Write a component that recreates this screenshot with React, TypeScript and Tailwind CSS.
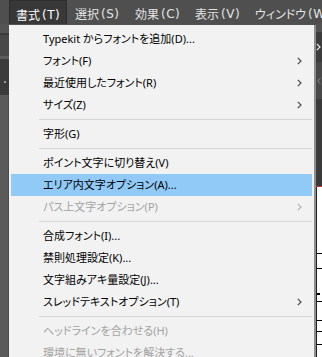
import React from "react"

type Item =
  | { sep: true }
  | { label: string; sub?: boolean; disabled?: boolean; active?: boolean }

const items: Item[] = [
  { label: "Typekit からフォントを追加(D)..." },
  { label: "フォント(F)", sub: true },
  { label: "最近使用したフォント(R)", sub: true },
  { label: "サイズ(Z)", sub: true },
  { sep: true },
  { label: "字形(G)" },
  { sep: true },
  { label: "ポイント文字に切り替え(V)" },
  { label: "エリア内文字オプション(A)...", active: true },
  { label: "パス上文字オプション(P)", sub: true, disabled: true },
  { sep: true },
  { label: "合成フォント(I)..." },
  { label: "禁則処理設定(K)..." },
  { label: "文字組みアキ量設定(J)..." },
  { label: "スレッドテキストオプション(T)", sub: true },
  { sep: true },
  { label: "ヘッドラインを合わせる(H)", disabled: true },
  { label: "環境に無いフォントを解決する...", disabled: true },
]

const menus = [
  ["書式", "(T)"],
  ["選択", "(S)"],
  ["効果", "(C)"],
  ["表示", "(V)"],
  ["ウィンドウ", "(W)"],
]

const font = "[font-family:'Noto_Sans','Noto_Sans_CJK_JP',sans-serif] [font-feature-settings:'palt']"

function Chevron({ color }: { color: string }) {
  return (
    <svg width="5" height="8" viewBox="0 0 5 8" className="shrink-0">
      <polyline points="0.8,0.8 4,4 0.8,7.2" fill="none" stroke={color} strokeWidth="1.2" />
    </svg>
  )
}

export default function App() {
  return (
    <div className={`relative w-[322px] h-[357px] overflow-hidden bg-[#535353] ${font}`}>
      {/* menu bar */}
      <div className="flex h-[24px] pl-[9px] bg-[#4f4f4f] text-[12px] text-[#e4e4e4] whitespace-nowrap">
        {menus.map(([jp, key], i) => (
          <div
            key={jp}
            className={`shrink-0 h-full pt-[4px] ${i === 0 ? "w-[58px] mr-[2px] bg-[#383838] border-t border-x border-[#2e2e2e]" : "w-[60px]"}`}
          >
            <div className={`h-full flex items-center pl-[6px] ${i === 0 ? "text-white" : ""}`}>
              <span className="[font-family:'Noto_Sans_CJK_JP',sans-serif]">{jp}</span>
              <span className="pl-[2px] tracking-[0.5px] [font-family:'DejaVu_Sans',sans-serif]">{key}</span>
            </div>
          </div>
        ))}
      </div>

      {/* background panels */}
      <div className="flex h-[333px]">
        <div className="w-[9px] flex flex-col">
          <div className="h-[9px] bg-[#545454]" />
          <div className="h-[2px] bg-[#3a3a3a]" />
          <div className="h-[21px] bg-[#484848]" />
          <div className="h-[3px] bg-[#5c5c5c]" />
          <div className="h-[36px] bg-[#3b3b3b] flex items-center justify-center">
            <div className="w-[2px] h-[2px] bg-[#9a9a9a] mt-[10px]" />
          </div>
          <div className="flex-1 bg-[#5a5a5a] border-r border-[#4c4c4c]" />
        </div>
        <div className="flex-1 bg-[#535353]" />
        <div className="w-[6px] flex flex-col">
          <div className="h-[8px] bg-[#535353]" />
          <div className="h-[30px] bg-[#3c3c3c] flex items-center justify-end pr-[1px]">
            <Chevron color="#f0f0f0" />
          </div>
          <div className="h-[37px] bg-[#484848] flex items-center justify-center">
            <svg width="4" height="8" viewBox="0 0 4 8">
              <polyline points="3.5,0.8 0.8,4 3.5,7.2" fill="none" stroke="#8a8a8a" strokeWidth="1" />
            </svg>
          </div>
          <div className="h-[87px] bg-[#3a3a3a]" />
          <div className="h-[1px] bg-[#d23030]" />
          <div className="flex-1 bg-white border-l border-[#202020] flex flex-col">
            <div className="h-[66px]" />
            <div className="h-[1px] bg-black" />
            <div className="h-[14px]" />
            <div className="h-[1px] bg-black" />
            <div className="h-[24px]" />
            <div className="h-[2px] w-[3px] bg-black" />
            <div className="h-[6px]" />
            <div className="h-[1px] bg-black" />
            <div className="h-[18px]" />
            <div className="h-[1px] bg-black" />
            <div className="h-[10px]" />
            <div className="h-[1px] bg-black" />
            <div className="h-[12px]" />
            <div className="h-[1px] bg-black" />
          </div>
        </div>
      </div>

      {/* dropdown */}
      <div className="absolute left-[9px] top-[25px] w-[307px] h-[340px] bg-[#f2f2f2] border-r-2 border-[#8e8e8e] pt-[3px] px-[2px] text-[11px]">
        {items.map((it, i) =>
          "sep" in it ? (
            <div key={i} className="h-[7px] flex items-center pl-[28px]">
              <div className="h-[1px] w-full bg-[#d6d6d6]" />
            </div>
          ) : (
            <div
              key={i}
              className={`h-[22px] flex items-center pl-[32px] pr-[10px] whitespace-nowrap ${it.active ? "bg-[#91c9f7]" : ""} ${it.disabled ? "text-[#a3a3a3]" : "text-black"}`}
            >
              <span className="flex-1">{it.label}</span>
              {it.sub && <Chevron color={it.disabled ? "#b4b4b4" : "#4a4a4a"} />}
            </div>
          )
        )}
      </div>
    </div>
  )
}
